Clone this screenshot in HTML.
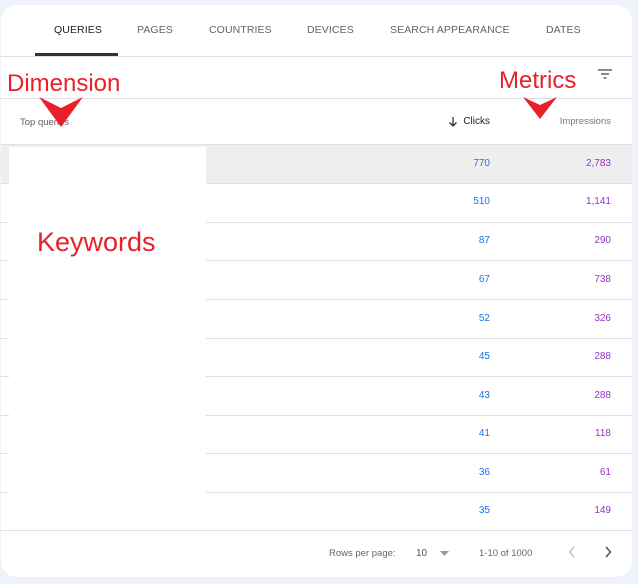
<!DOCTYPE html>
<html><head><style>
body{margin:0;width:638px;height:584px;background:#eef3fb;font-family:"Liberation Sans",sans-serif;position:relative;overflow:hidden}
.card{position:absolute;left:1px;top:5px;width:631px;height:572px;background:#fff;border-radius:16px;overflow:hidden}
.tab{position:absolute;top:19px;font-size:10.5px;color:#5f6368;letter-spacing:.1px}
.hl{position:absolute;left:0;right:0;height:1px;background:#e0e0e0}
.n{position:absolute;font-size:10px}
.c{right:142px;color:#1a73e8}
.i{right:21px;color:#9334c4}
.red{position:absolute;color:#e8202a;font-family:"Liberation Sans",sans-serif}
</style></head><body>
<div class="card">
<div class="tab" style="left:53px;color:#202124">QUERIES</div>
<div class="tab" style="left:136px">PAGES</div>
<div class="tab" style="left:208px">COUNTRIES</div>
<div class="tab" style="left:306px">DEVICES</div>
<div class="tab" style="left:389px">SEARCH APPEARANCE</div>
<div class="tab" style="left:545px">DATES</div>
<div style="position:absolute;left:34px;top:48px;width:83px;height:3px;background:#333"></div>
<div class="hl" style="top:51px"></div>
<svg style="position:absolute;left:597px;top:64px" width="14" height="10"><path d="M0 1H14M3 5H11M5.5 9H8.5" stroke="#444" stroke-width="1.3"/></svg>
<div class="hl" style="top:93px"></div>
<div class="n" style="left:19px;top:112px;color:#5f6368;font-size:9.5px">Top queries</div>
<div class="n" style="right:142px;top:111px;color:#202124">Clicks</div>
<svg style="position:absolute;left:447px;top:111px" width="10" height="11"><path d="M5 1V10M1.5 6.5L5 10L8.5 6.5" stroke="#333" stroke-width="1.3" fill="none"/></svg>
<div class="n" style="right:21px;top:111px;color:#777;font-size:9.5px">Impressions</div>
<div class="hl" style="top:139px"></div>
<div style="position:absolute;left:0;right:0;top:140px;height:38px;background:#eeeeee"></div>
<div class="hl" style="top:178px"></div><div class="hl" style="top:217px"></div><div class="hl" style="top:255px"></div><div class="hl" style="top:294px"></div><div class="hl" style="top:333px"></div><div class="hl" style="top:371px"></div><div class="hl" style="top:410px"></div><div class="hl" style="top:448px"></div><div class="hl" style="top:487px"></div><div class="hl" style="top:525px"></div>
<div style="position:absolute;left:8px;top:142px;width:197px;height:383px;background:#fff"></div>
<div class="n c" style="top:153px">770</div><div class="n i" style="top:153px">2,783</div>
<div class="n c" style="top:191px">510</div><div class="n i" style="top:191px">1,141</div>
<div class="n c" style="top:230px">87</div><div class="n i" style="top:230px">290</div>
<div class="n c" style="top:269px">67</div><div class="n i" style="top:269px">738</div>
<div class="n c" style="top:308px">52</div><div class="n i" style="top:308px">326</div>
<div class="n c" style="top:346px">45</div><div class="n i" style="top:346px">288</div>
<div class="n c" style="top:385px">43</div><div class="n i" style="top:385px">288</div>
<div class="n c" style="top:423px">41</div><div class="n i" style="top:423px">118</div>
<div class="n c" style="top:462px">36</div><div class="n i" style="top:462px">61</div>
<div class="n c" style="top:500px">35</div><div class="n i" style="top:500px">149</div>
<div class="n" style="left:328px;top:543px;color:#666;font-size:9.5px">Rows per page:</div>
<div class="n" style="left:415px;top:543px;color:#555">10</div>
<svg style="position:absolute;left:439px;top:546px" width="9" height="5"><path d="M0 0H9L4.5 5Z" fill="#999"/></svg>
<div class="n" style="left:478px;top:543px;color:#666;font-size:9.5px">1-10 of 1000</div>
<svg style="position:absolute;left:567px;top:541px" width="8" height="12"><path d="M6 1L1.5 6L6 11" stroke="#bbb" stroke-width="1.3" fill="none"/></svg>
<svg style="position:absolute;left:603px;top:541px" width="8" height="12"><path d="M2 1L6.5 6L2 11" stroke="#444" stroke-width="1.4" fill="none"/></svg>
</div>
<div class="red" style="left:7px;top:70px;font-size:24px">Dimension</div>
<div class="red" style="left:499px;top:67px;font-size:24px">Metrics</div>
<div class="red" style="left:37px;top:227px;font-size:27px">Keywords</div>
<svg style="position:absolute;left:0;top:0" width="638" height="140"><path d="M39 97L61 108L83 97L61 127Z" fill="#e8202a"/><path d="M523 97L540 105L557 97L540 119Z" fill="#e8202a"/></svg>
</body></html>
